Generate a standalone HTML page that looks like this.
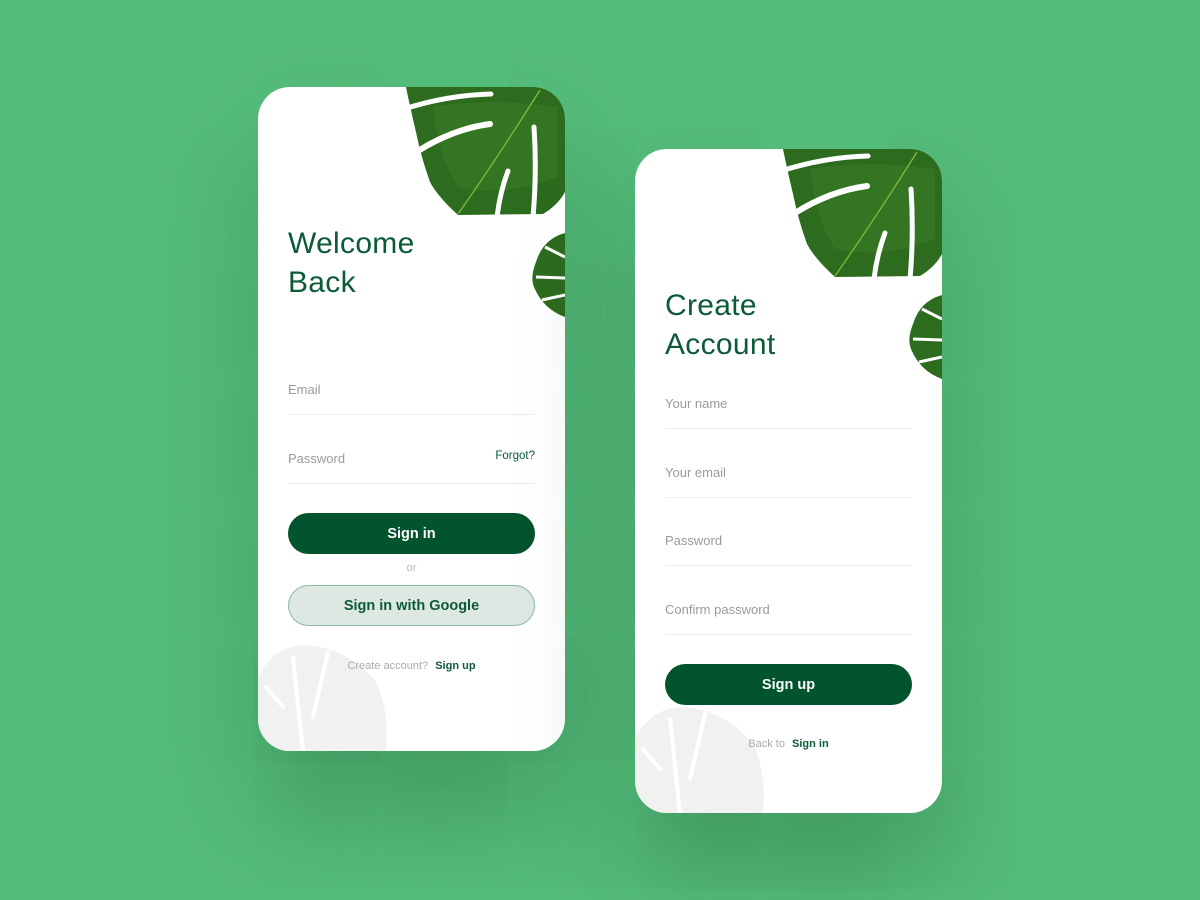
<!DOCTYPE html>
<html><head><style>
*{margin:0;padding:0;box-sizing:border-box}
body{width:1200px;height:900px;background:#55bd7b;position:relative;overflow:hidden;font-family:"Liberation Sans",sans-serif}
.card{position:absolute;width:307px;height:664px;background:#fff;border-radius:32px;overflow:hidden;box-shadow:0 60px 110px rgba(30,90,50,0.38)}
.leaf{position:absolute;left:0;top:0}
h1{position:absolute;left:30px;font-weight:normal;font-size:30px;line-height:39px;color:#0c5a36;letter-spacing:0.3px}
.f{position:absolute;left:30px;width:247px;height:33px;border-bottom:1.5px solid #eceeed;font-size:13px;color:#9a9a9a}
.f span{position:absolute;right:0;top:-1px;font-size:11.5px;color:#0c5a36}
.btn{position:absolute;left:30px;width:247px;height:41px;border-radius:21px;background:#02542f;color:#fff;font-weight:bold;font-size:14.5px;text-align:center;line-height:42px}
.g{background:#dde8e2;border:1px solid #8dbaa2;color:#0c5a36;line-height:40px}
.small{position:absolute;left:0;width:307px;text-align:center;font-size:11px;color:#aaa}
.small b{color:#0c5a36;margin-left:4px}
</style></head><body>

<svg width="0" height="0" style="position:absolute">
<defs>
<g id="lf">
<path d="M0,664 L0,590 Q15,560 45,558 Q90,560 118,595 Q132,625 128,664Z" fill="#f1f2f0"/>
<path d="M35,570 L45,664 M70,565 L55,630 M8,600 L25,620" stroke="#fff" stroke-width="4" fill="none" stroke-linecap="round"/>
<path d="M148,0 L307,0 L307,105 Q300,118 285,127 L200,128 Q180,110 172,95 Q163,70 158,45 Q152,20 148,0Z" fill="#2d6b1e"/>
<path d="M175,20 Q230,10 300,20 L300,90 Q250,110 200,100 Q180,70 175,20Z" fill="#3a7f26" opacity="0.5"/>
<path d="M200,127 Q240,70 282,3" stroke="#86b83a" stroke-width="1.3" fill="none"/>
<path d="M146,22 Q190,8 233,7" stroke="#fff" stroke-width="5" fill="none" stroke-linecap="round"/>
<path d="M160,64 Q195,42 232,37" stroke="#fff" stroke-width="6" fill="none" stroke-linecap="round"/>
<path d="M239,130 Q242,105 250,84" stroke="#fff" stroke-width="5" fill="none" stroke-linecap="round"/>
<path d="M275,130 Q279,85 276,40" stroke="#fff" stroke-width="5" fill="none" stroke-linecap="round"/>
<path d="M307,146 Q285,152 278,175 Q272,190 276,200 Q285,222 307,230Z" fill="#2d6b1e"/>
<path d="M287,160 L307,170 M278,190 L307,191 M284,213 L307,208" stroke="#fff" stroke-width="3" fill="none"/>
</g>
</defs>
</svg>

<div class="card" style="left:258px;top:87px">
<svg class="leaf" width="307" height="664" viewBox="0 0 307 664"><use href="#lf"/></svg>
<h1 style="top:137px">Welcome<br>Back</h1>
<div class="f" style="top:295px">Email</div>
<div class="f" style="top:364px">Password<span>Forgot?</span></div>
<div class="btn" style="top:426px">Sign in</div>
<div class="small" style="top:475px;color:#a8c7b6">or</div>
<div class="btn g" style="top:498px">Sign in with Google</div>
<div class="small" style="top:573px">Create account? <b>Sign up</b></div>
</div>

<div class="card" style="left:635px;top:149px">
<svg class="leaf" width="307" height="664" viewBox="0 0 307 664"><use href="#lf"/></svg>
<h1 style="top:137px">Create<br>Account</h1>
<div class="f" style="top:247px">Your name</div>
<div class="f" style="top:316px">Your email</div>
<div class="f" style="top:384px">Password</div>
<div class="f" style="top:453px">Confirm password</div>
<div class="btn" style="top:515px">Sign up</div>
<div class="small" style="top:589px">Back to <b>Sign in</b></div>
</div>
</body></html>
